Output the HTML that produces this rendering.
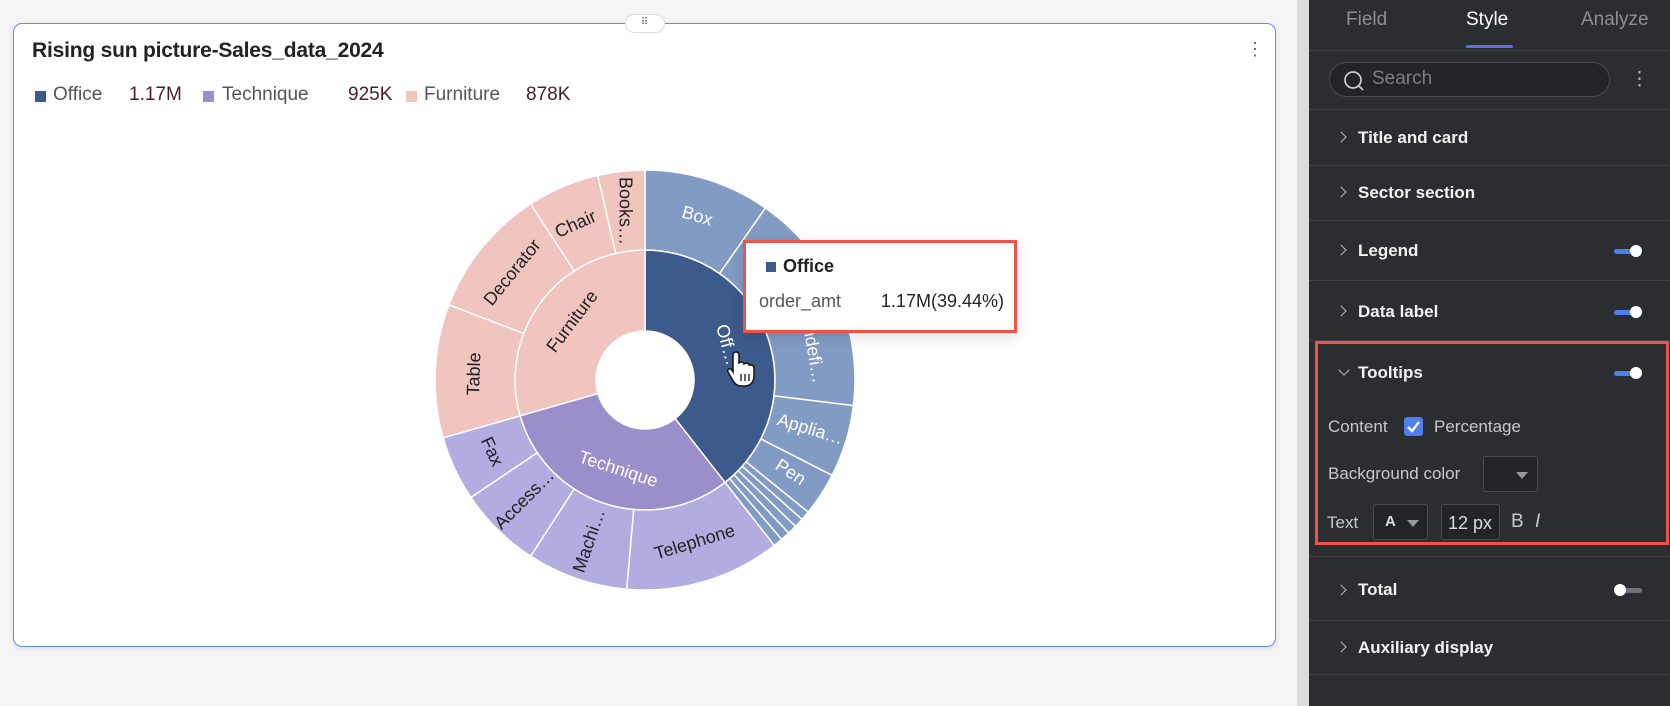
<!DOCTYPE html>
<html><head><meta charset="utf-8"><style>
*{box-sizing:border-box;margin:0;padding:0}
body{width:1670px;height:706px;background:#f4f4f5;font-family:"Liberation Sans",sans-serif;position:relative;overflow:hidden}
.card{position:absolute;left:13px;top:23px;width:1263px;height:624px;background:#fff;border:1.5px solid #5b8ff9;border-radius:9px;box-shadow:0 2px 6px rgba(0,0,0,.08)}
.handle{position:absolute;left:611px;top:-10px;width:40px;height:19px;border:1px solid #ddd;border-radius:10px;background:#fff;font-size:10px;color:#666;text-align:center;line-height:16px;letter-spacing:1px}
.title{position:absolute;left:18px;top:15px;font-size:21px;font-weight:bold;color:#222;letter-spacing:-0.2px}
.kebab{position:absolute;left:1232px;top:15px;color:#666;font-size:18px}
.lg{position:absolute;top:84px;font-size:19px;color:#555;white-space:nowrap}
.lg.v{color:#4a1d2e}
.sq{position:absolute;top:91px;width:11px;height:11px}
.strip{position:absolute;left:1297px;top:0;width:12px;height:706px;background:#dcdcde}
.panel{position:absolute;left:1309px;top:0;width:361px;height:706px;background:#2c2d31;color:#fff}
.tab{position:absolute;top:9px;font-size:19px;color:#8d8e92}
.ln{position:absolute;left:0;width:361px;height:1px;background:#404146}
.lbl{position:absolute;left:49px;font-size:17px;font-weight:bold;color:#f2f2f2;line-height:20px}
.chev{position:absolute;left:28px;width:8px;height:8px;border-right:1.5px solid #bbb;border-top:1.5px solid #bbb;transform:rotate(45deg)}
.tg{position:absolute;left:305px;width:28px;height:12px}
.tg .t{position:absolute;left:0;top:4px;width:24px;height:5px;border-radius:3px;background:#4d7ff0}
.tg .k{position:absolute;left:16px;top:0;width:12px;height:12px;border-radius:6px;background:#fff}
.gtxt{position:absolute;font-size:17px;color:#c8c8cc;line-height:20px}
.box{position:absolute;border:1px solid #4a4b50;border-radius:3px;background:#232428}
</style></head><body>
<div class="card">
<div class="handle">⠿</div>
<div class="title">Rising sun picture-Sales_data_2024</div>
<div class="kebab">⋮</div>
</div>
<div class="sq" style="left:35px;background:#3d5a8c"></div><div class="lg" style="left:53px">Office</div><div class="lg v" style="left:129px">1.17M</div>
<div class="sq" style="left:203px;background:#9a8fcb"></div><div class="lg" style="left:222px">Technique</div><div class="lg v" style="left:348px">925K</div>
<div class="sq" style="left:406px;background:#f0c4bf"></div><div class="lg" style="left:424px">Furniture</div><div class="lg v" style="left:526px">878K</div>
<svg id="ch" width="1670" height="706" style="position:absolute;left:0;top:0" font-family="Liberation Sans, sans-serif" font-size="18">
<g id="segs"></g>
<g text-anchor="middle" dominant-baseline="middle">
<text x="697" y="217" fill="#fff" transform="rotate(17 697 217)">Box</text>
<text x="812" y="350" fill="#fff" transform="rotate(80 812 350)">undefi…</text>
<text x="810" y="430" fill="#fff" transform="rotate(17 810 430)">Applia…</text>
<text x="790" y="473" fill="#fff" transform="rotate(33 790 473)">Pen</text>
<text x="695" y="543" fill="#222" transform="rotate(-17 695 543)">Telephone</text>
<text x="590" y="541" fill="#222" transform="rotate(-71 590 541)">Machi…</text>
<text x="525" y="500" fill="#222" transform="rotate(-45 525 500)">Access…</text>
<text x="491" y="452" fill="#222" transform="rotate(65 491 452)">Fax</text>
<text x="475" y="374" fill="#222" transform="rotate(-88 475 374)">Table</text>
<text x="513" y="273" fill="#222" transform="rotate(-51 513 273)">Decorator</text>
<text x="576" y="225" fill="#222" transform="rotate(-24 576 225)">Chair</text>
<text x="624" y="211" fill="#222" transform="rotate(90 624 211)">Books…</text>
<text x="726" y="345" fill="#fff" transform="rotate(75 726 345)">Off…</text>
<text x="618" y="470" fill="#fff" transform="rotate(18 618 470)">Technique</text>
<text x="573" y="322" fill="#222" transform="rotate(-53 573 322)">Furniture</text>
</g>
<g transform="translate(728,352)">
<path d="M8 0 C10 0 11 1 11 3 L11 11 L13 10 C15 10 16 11 16 12 L18 11 C20 11 21 12 21 13 L23 13 C25 13 26 14 26 16 L26 24 C26 30 22 34 17 34 L13 34 C9 34 6 31 4 27 L0 20 C-1 18 1 16 3 17 L5 20 L5 3 C5 1 6 0 8 0Z" fill="#fff" stroke="#111" stroke-width="1.5"/>
<path d="M13 22V29M17 22V29M21 22V29" stroke="#111" stroke-width="1.3"/>
</g>
</svg>
<div style="position:absolute;left:743px;top:240px;width:274px;height:93px;background:#fff;border:3px solid #f0524a;box-shadow:0 4px 14px rgba(0,0,0,.12)">
<div style="position:absolute;left:20px;top:19px;width:10px;height:10px;background:#3d5a8c"></div>
<div style="position:absolute;left:37px;top:13px;font-size:18px;font-weight:bold;color:#222">Office</div>
<div style="position:absolute;left:13px;top:48px;font-size:18px;color:#555">order_amt</div>
<div style="position:absolute;right:10px;top:48px;font-size:18px;color:#222">1.17M(39.44%)</div>
</div>
<div class="strip"></div>
<div class="panel">
<div class="tab" style="left:37px">Field</div>
<div class="tab" style="left:157px;color:#fff">Style</div>
<div class="tab" style="left:272px">Analyze</div>
<div style="position:absolute;left:157px;top:45px;width:47px;height:3px;background:#5a6ee6;border-radius:2px"></div>
<div class="ln" style="top:50px"></div>
<div style="position:absolute;left:20px;top:62px;width:281px;height:35px;border:1px solid #4a4b50;border-radius:18px;background:#232428"></div>
<svg style="position:absolute;left:34px;top:70px" width="22" height="22"><circle cx="10" cy="10" r="8" fill="none" stroke="#ccc" stroke-width="1.7"/><path d="M16 16l4 4" stroke="#ccc" stroke-width="1.7"/></svg>
<div style="position:absolute;left:63px;top:68px;font-size:19px;color:#7d7e83">Search</div>
<div style="position:absolute;left:321px;top:68px;font-size:19px;color:#bbb">⋮</div>
<div class="ln" style="top:109px"></div>
<div class="chev" style="top:133px"></div><div class="lbl" style="top:128px">Title and card</div>
<div class="ln" style="top:165px"></div>
<div class="chev" style="top:188px"></div><div class="lbl" style="top:183px">Sector section</div>
<div class="ln" style="top:220px"></div>
<div class="chev" style="top:246px"></div><div class="lbl" style="top:241px">Legend</div><div class="tg" style="top:245px"><div class="t"></div><div class="k"></div></div>
<div class="ln" style="top:280px"></div>
<div class="chev" style="top:307px"></div><div class="lbl" style="top:302px">Data label</div><div class="tg" style="top:306px"><div class="t"></div><div class="k"></div></div>
<div class="ln" style="top:340px"></div>
<div style="position:absolute;left:6px;top:341px;width:354px;height:204px;border:3px solid #f0524a"></div>
<div class="chev" style="left:31px;top:366px;transform:rotate(135deg)"></div>
<div class="lbl" style="top:363px">Tooltips</div>
<div class="tg" style="top:367px"><div class="t"></div><div class="k"></div></div>
<div class="gtxt" style="left:19px;top:417px">Content</div>
<div style="position:absolute;left:95px;top:417px;width:19px;height:19px;background:#4d7ff0;border-radius:3px"><svg width="19" height="19"><path d="M4 10l4 4L15 5" fill="none" stroke="#fff" stroke-width="2.3"/></svg></div>
<div class="gtxt" style="left:125px;top:417px">Percentage</div>
<div class="gtxt" style="left:19px;top:464px">Background color</div>
<div class="box" style="left:174px;top:456px;width:55px;height:36px"><div style="position:absolute;left:32px;top:15px;border:6px solid transparent;border-top:7px solid #999;border-bottom:0"></div></div>
<div class="gtxt" style="left:18px;top:513px">Text</div>
<div class="box" style="left:64px;top:504px;width:55px;height:36px"><span style="position:absolute;left:11px;top:8px;font-size:15px;font-weight:bold;color:#ddd">A</span><div style="position:absolute;left:33px;top:15px;border:6px solid transparent;border-top:7px solid #999;border-bottom:0"></div></div>
<div class="box" style="left:132px;top:504px;width:59px;height:36px"><span style="position:absolute;left:6px;top:8px;font-size:18px;color:#ddd">12 px</span></div>
<div class="gtxt" style="left:202px;top:512px;font-size:19px">B</div>
<div class="gtxt" style="left:226px;top:512px;font-size:19px;font-style:italic">I</div>
<div class="ln" style="top:556px"></div>
<div class="chev" style="top:586px"></div><div class="lbl" style="top:580px">Total</div><div class="tg" style="top:584px"><div class="t" style="background:#70717a;left:4px"></div><div class="k" style="left:0"></div></div>
<div class="ln" style="top:620px"></div>
<div class="chev" style="top:643px"></div><div class="lbl" style="top:638px">Auxiliary display</div>
<div class="ln" style="top:674px"></div>
</div>
<script>
var cx=645,cy=380;
function P(r,a){a=a*Math.PI/180;return [cx+r*Math.sin(a),cy-r*Math.cos(a)];}
function arc(r0,r1,a0,a1,c){var p1=P(r1,a0),p2=P(r1,a1),p3=P(r0,a1),p4=P(r0,a0),l=(a1-a0)>180?1:0;
return '<path d="M'+p1+'A'+r1+','+r1+' 0 '+l+' 1 '+p2+'L'+p3+'A'+r0+','+r0+' 0 '+l+' 0 '+p4+'Z" fill="'+c+'" stroke="#fff" stroke-width="1.5"/>';}
var s='';
s+=arc(49,130,0,142,'#3d5a8c')+arc(49,130,142,254,'#9a8fcb')+arc(49,130,254,360,'#f0c4bf');
var oc='#819bc4',tc='#b3ace0',fc='#f0c4bf';
var segs=[[0,35,oc],[35,62,oc],[62,97,oc],[97,117,oc],[117,129,oc],[129,131.6,oc],[131.6,134.2,oc],[134.2,136.8,oc],[136.8,139.4,oc],[139.4,142,oc],
[142,185,tc],[185,213,tc],[213,236,tc],[236,254,tc],[254,291,fc],[291,327,fc],[327,347,fc],[347,360,fc]];
segs.forEach(function(g){s+=arc(130,210,g[0],g[1],g[2]);});
document.getElementById('segs').innerHTML=s;
</script>
</body></html>
